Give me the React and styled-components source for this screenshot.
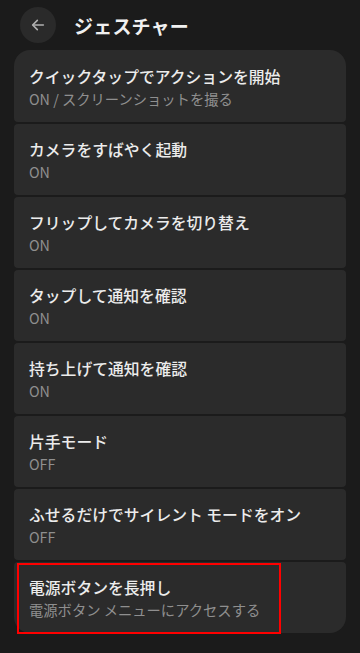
import styled, { createGlobalStyle } from 'styled-components';

const GlobalStyle = createGlobalStyle`
	html, body {
		margin: 0;
		padding: 0;
		background: #1b1b1b;
	}
	body {
		font-family: "Noto Sans CJK JP", "Noto Sans", Roboto, sans-serif;
		color: #e8e8e8;
	}
`

const Screen = styled.div`
	width: 360px;
	height: 653px;
	background: #1b1b1b;
	overflow: hidden;
`

const TopBar = styled.header`
	display: flex;
	align-items: center;
	height: 50px;
	padding: 0 0 0 20px;
	box-sizing: border-box;
`

const BackButton = styled.button`
	width: 36px;
	height: 36px;
	border: none;
	border-radius: 50%;
	background: #2a2a2a;
	display: flex;
	align-items: center;
	justify-content: center;
	padding: 0;
	margin-right: 18px;
`

const Title = styled.h1`
	margin: 0;
	font-size: 19px;
	font-weight: 700;
	color: #f0f0f0;
	letter-spacing: 0.2px;
`

const List = styled.ul`
	list-style: none;
	margin: 0 14px;
	padding: 0;
	display: flex;
	flex-direction: column;
	gap: 2px;
`

const Item = styled.li`
	position: relative;
	height: 71px;
	background: #2b2b2b;
	border-radius: 4px;
	display: flex;
	flex-direction: column;
	justify-content: center;
	padding: 2px 15px 0;
	box-sizing: border-box;

	&:first-child {
		border-radius: 16px 16px 4px 4px;
		height: 72px;
	}
	&:last-child {
		border-radius: 4px 4px 16px 16px;
	}
`

const ItemTitle = styled.div`
	font-size: 15.8px;
	font-weight: 500;
	color: #ececec;
	line-height: 22px;
	white-space: nowrap;
`

const ItemSub = styled.div`
	font-size: 14.3px;
	color: #8f8f8f;
	line-height: 21px;
	white-space: nowrap;
`

const Highlight = styled.div`
	position: absolute;
	left: 3px;
	top: 1px;
	width: 264px;
	height: 71px;
	box-sizing: border-box;
	border: 2.5px solid #ff0000;
	pointer-events: none;
`

const items = [
	{ title: 'クイックタップでアクションを開始', sub: 'ON / スクリーンショットを撮る' },
	{ title: 'カメラをすばやく起動', sub: 'ON' },
	{ title: 'フリップしてカメラを切り替え', sub: 'ON' },
	{ title: 'タップして通知を確認', sub: 'ON' },
	{ title: '持ち上げて通知を確認', sub: 'ON' },
	{ title: '片手モード', sub: 'OFF' },
	{ title: 'ふせるだけでサイレント モードをオン', sub: 'OFF' },
	{ title: '電源ボタンを長押し', sub: '電源ボタン メニューにアクセスする', marked: true },
]

const BackArrow = () => (
	<svg width="16" height="16" viewBox="0 0 24 24" fill="none" stroke="#b0b0b0" strokeWidth="2.4" strokeLinecap="round" strokeLinejoin="round">
		<path d="M20 12H5" />
		<path d="M11 5l-7 7 7 7" />
	</svg>
)

const App = () => (
	<Screen>
		<GlobalStyle />
		<TopBar>
			<BackButton aria-label="戻る">
				<BackArrow />
			</BackButton>
			<Title>ジェスチャー</Title>
		</TopBar>
		<List>
			{items.map(item => (
				<Item key={item.title}>
					<ItemTitle>{item.title}</ItemTitle>
					<ItemSub>{item.sub}</ItemSub>
					{item.marked && <Highlight />}
				</Item>
			))}
		</List>
	</Screen>
)

export default App;
